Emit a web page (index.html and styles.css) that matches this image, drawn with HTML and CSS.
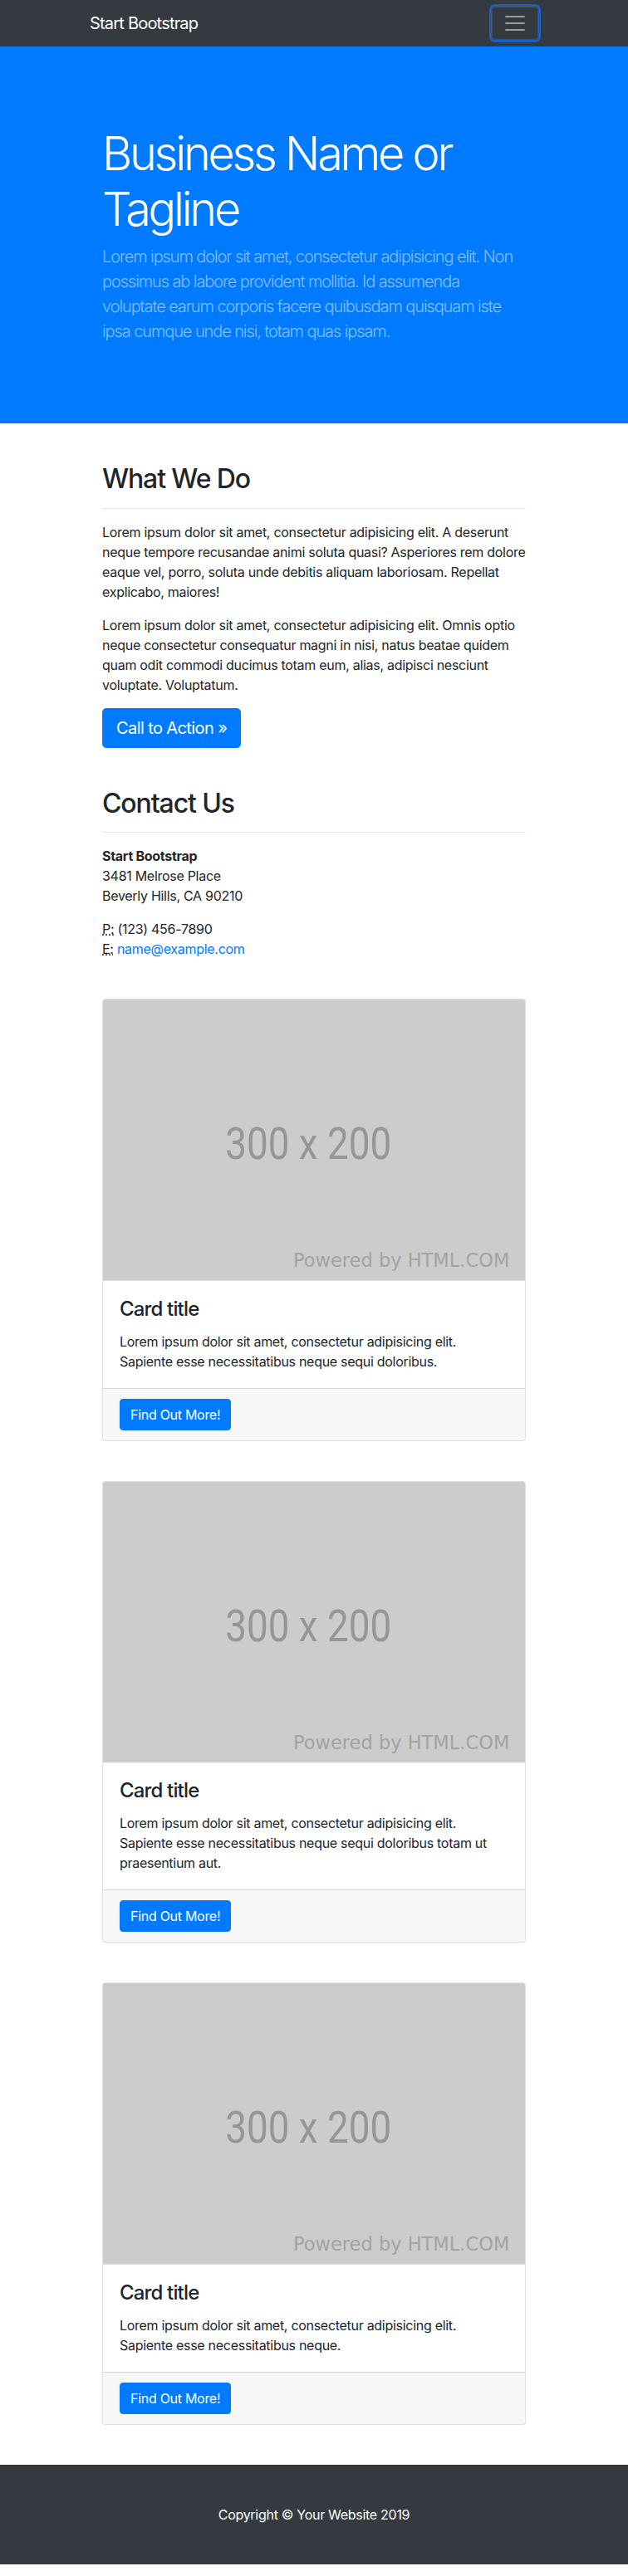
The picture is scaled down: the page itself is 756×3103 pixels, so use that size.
FILE: index.html
```html
<!DOCTYPE html>
<html lang="en">
<head>
<meta charset="utf-8">
<title>Business Frontpage</title>
<link rel="stylesheet" href="styles.css">
</head>
<body>
<nav class="navbar">
  <div class="nav-inner">
    <a class="brand" href="#">Start Bootstrap</a>
    <button class="toggler" type="button" aria-label="Toggle navigation">
      <svg class="toggler-icon" viewBox="0 0 30 30" width="30" height="30"><path d="M4 7h22M4 15h22M4 23h22" stroke="rgba(255,255,255,0.5)" stroke-width="2" stroke-linecap="round" fill="none"/></svg>
    </button>
  </div>
</nav>

<header class="hero">
  <div class="container">
    <h1 class="hero-title">Business Name or Tagline</h1>
    <p class="lead">Lorem ipsum dolor sit amet, consectetur adipisicing elit. Non possimus ab labore provident mollitia. Id assumenda voluptate earum corporis facere quibusdam quisquam iste ipsa cumque unde nisi, totam quas ipsam.</p>
  </div>
</header>

<main class="container">
  <section class="col">
    <h2 class="section-title">What We Do</h2>
    <hr class="rule">
    <p class="para">Lorem ipsum dolor sit amet, consectetur adipisicing elit. A deserunt neque tempore recusandae animi soluta quasi? Asperiores rem dolore eaque vel, porro, soluta unde debitis aliquam laboriosam. Repellat explicabo, maiores!</p>
    <p class="para">Lorem ipsum dolor sit amet, consectetur adipisicing elit. Omnis optio neque consectetur consequatur magni in nisi, natus beatae quidem quam odit commodi ducimus totam eum, alias, adipisci nesciunt voluptate. Voluptatum.</p>
    <a class="btn btn-lg" href="#">Call to Action &raquo;</a>
  </section>

  <section class="col">
    <h2 class="section-title">Contact Us</h2>
    <hr class="rule">
    <address class="addr">
      <strong>Start Bootstrap</strong><br>3481 Melrose Place<br>Beverly Hills, CA 90210
    </address>
    <address class="addr">
      <abbr title="Phone">P:</abbr> (123) 456-7890<br>
      <abbr title="Email">E:</abbr> <a class="link" href="#">name@example.com</a>
    </address>
  </section>

  <div class="col">
    <div class="card">
      <svg class="card-img" viewBox="0 0 300 200" preserveAspectRatio="none"><rect width="300" height="200" fill="#cccccc"/><text transform="translate(146 113.4) scale(0.845 1)" text-anchor="middle" font-family="Roboto, 'Liberation Sans', sans-serif" font-size="32" fill="#969696">300 x 200</text><text x="289" y="190" text-anchor="end" font-family="'DejaVu Sans', sans-serif" font-size="13.3" fill="#a3a3a3">Powered by HTML.COM</text></svg>
      <div class="card-body">
        <h4 class="card-title">Card title</h4>
        <p class="card-text">Lorem ipsum dolor sit amet, consectetur adipisicing elit. Sapiente esse necessitatibus neque sequi doloribus.</p>
      </div>
      <div class="card-footer"><a class="btn" href="#">Find Out More!</a></div>
    </div>
  </div>

  <div class="col">
    <div class="card">
      <svg class="card-img" viewBox="0 0 300 200" preserveAspectRatio="none"><rect width="300" height="200" fill="#cccccc"/><text transform="translate(146 113.4) scale(0.845 1)" text-anchor="middle" font-family="Roboto, 'Liberation Sans', sans-serif" font-size="32" fill="#969696">300 x 200</text><text x="289" y="190" text-anchor="end" font-family="'DejaVu Sans', sans-serif" font-size="13.3" fill="#a3a3a3">Powered by HTML.COM</text></svg>
      <div class="card-body">
        <h4 class="card-title">Card title</h4>
        <p class="card-text">Lorem ipsum dolor sit amet, consectetur adipisicing elit. Sapiente esse necessitatibus neque sequi doloribus totam ut praesentium aut.</p>
      </div>
      <div class="card-footer"><a class="btn" href="#">Find Out More!</a></div>
    </div>
  </div>

  <div class="col">
    <div class="card">
      <svg class="card-img" viewBox="0 0 300 200" preserveAspectRatio="none"><rect width="300" height="200" fill="#cccccc"/><text transform="translate(146 113.4) scale(0.845 1)" text-anchor="middle" font-family="Roboto, 'Liberation Sans', sans-serif" font-size="32" fill="#969696">300 x 200</text><text x="289" y="190" text-anchor="end" font-family="'DejaVu Sans', sans-serif" font-size="13.3" fill="#a3a3a3">Powered by HTML.COM</text></svg>
      <div class="card-body">
        <h4 class="card-title">Card title</h4>
        <p class="card-text">Lorem ipsum dolor sit amet, consectetur adipisicing elit. Sapiente esse necessitatibus neque.</p>
      </div>
      <div class="card-footer"><a class="btn" href="#">Find Out More!</a></div>
    </div>
  </div>
</main>

<footer class="footer">
  <div class="container">
    <p class="copyright">Copyright &copy; Your Website 2019</p>
  </div>
</footer>
</body>
</html>
```

FILE: styles.css
```css
* { box-sizing: border-box; }

body {
  margin: 0;
  font-family: Inter, "Noto Sans", "Liberation Sans", sans-serif;
  font-size: 16px;
  line-height: 1.5;
  letter-spacing: -0.018em;
  color: #212529;
  background: #fff;
}

.container {
  max-width: 540px;
  margin: 0 auto;
  padding: 0 15px;
}

/* navbar */
.navbar {
  background: #343a40;
  padding: 8px 16px;
}
.nav-inner {
  max-width: 540px;
  margin: 0 auto;
  display: flex;
  align-items: center;
  justify-content: space-between;
}
.brand {
  color: #fff;
  text-decoration: none;
  font-size: 20px;
  line-height: 30px;
  padding: 5px 0;
  letter-spacing: -0.04em;
}
.toggler {
  display: flex;
  align-items: center;
  justify-content: center;
  width: 56px;
  height: 40px;
  padding: 4px 12px;
  background: transparent;
  border: 1px solid rgba(255,255,255,0.1);
  border-radius: 4px;
  box-shadow: 0 0 0 3px #1b5ec4;
}
.toggler-icon { display: block; }

/* hero */
.hero {
  background: #007bff;
  padding: 48px 0;
  margin-bottom: 48px;
}
.hero-title {
  margin: 48px 0 8px;
  font-size: 56px;
  font-weight: 300;
  line-height: 1.2;
  letter-spacing: -0.06em;
  color: #fff;
}
.lead {
  margin: 0 0 48px;
  font-size: 20px;
  font-weight: 300;
  line-height: 1.5;
  letter-spacing: -0.055em;
  color: rgba(255,255,255,0.5);
}

/* content */
.col {
  margin-bottom: 48px;
}
.section-title {
  margin: 0;
  font-size: 32px;
  font-weight: 500;
  line-height: 1.2;
  letter-spacing: -0.035em;
}
.rule {
  margin: 15px 0 16px;
  border: 0;
  border-top: 1px solid rgba(0,0,0,0.1);
}
.para {
  margin: 0 0 16px;
}
.btn {
  display: inline-block;
  background: #007bff;
  color: #fff;
  text-decoration: none;
  border: 1px solid #007bff;
  border-radius: 4px;
  padding: 6px 12px;
  font-size: 16px;
  line-height: 24px;
}
.btn-lg {
  padding: 8px 16px;
  font-size: 20px;
  line-height: 30px;
  letter-spacing: -0.03em;
  border-radius: 4.8px;
}
.addr {
  font-style: normal;
  margin: 0 0 16px;
}
.addr strong { font-weight: 700; }
abbr[title] {
  text-decoration: underline dotted;
  cursor: help;
}
.link {
  color: #007bff;
  text-decoration: none;
}

/* cards */
.card {
  display: flex;
  flex-direction: column;
  border: 1px solid rgba(0,0,0,0.125);
  border-radius: 4px;
  overflow: hidden;
  background: #fff;
}
.card-img {
  display: block;
  width: 100%;
  aspect-ratio: 3 / 2;
  letter-spacing: 0;
}
.card-body {
  padding: 20px;
}
.card-title {
  margin: 0 0 12px;
  font-size: 24px;
  font-weight: 500;
  line-height: 1.2;
  letter-spacing: -0.035em;
}
.card-text {
  margin: 0;
}
.card-footer {
  padding: 12px 20px;
  background: rgba(0,0,0,0.03);
  border-top: 1px solid rgba(0,0,0,0.125);
}

/* footer */
.footer {
  background: #343a40;
  padding: 48px 0;
}
.copyright {
  margin: 0;
  text-align: center;
  color: #fff;
}
```
